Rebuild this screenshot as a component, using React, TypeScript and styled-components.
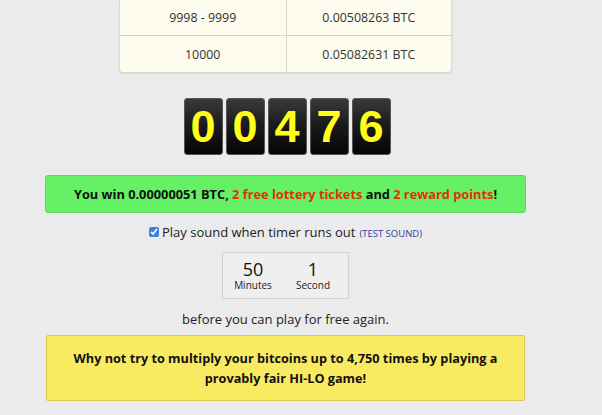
import React from "react";
import styled, { createGlobalStyle } from "styled-components";

const Global = createGlobalStyle`
  html, body { margin: 0; padding: 0; background: #ebebeb; }
  body { font-family: "Open Sans", "Liberation Sans", sans-serif; color: #222; }
`;

const Page = styled.div`
  width: 481px;
  margin-left: 45px;
  display: flex;
  flex-direction: column;
  align-items: center;
`;

const Table = styled.div`
  width: 331px;
  background: #fdfcef;
  border: 1px solid #d9d8cc;
  border-top: none;
  border-radius: 0 0 4px 4px;
  box-shadow: 0 1px 2px rgba(0,0,0,0.08);
  display: grid;
  grid-template-columns: 1fr 1fr;
`;

const Cell = styled.div<{ $h: number; $last?: boolean; $right?: boolean }>`
  height: ${(p) => p.$h}px;
  display: flex;
  align-items: center;
  justify-content: center;
  font-size: 12.4px;
  color: #333;
  border-bottom: ${(p) => (p.$last ? "none" : "1px solid #d6d5c9")};
  border-left: ${(p) => (p.$right ? "1px solid #d6d5c9" : "none")};
`;

const Counter = styled.div`
  margin-top: 25px;
  display: flex;
  gap: 3px;
  margin-left: 3px;
`;

const Digit = styled.div`
  width: 39px;
  height: 57px;
  border-radius: 3px;
  background: linear-gradient(#3a3a3a 0%, #1c1c1c 45%, #050505 100%);
  border: 1px solid #555;
  box-sizing: border-box;
  display: flex;
  align-items: center;
  justify-content: center;
  font-family: "Liberation Sans", Arial, sans-serif;
  font-weight: bold;
  font-size: 45px;
  color: #ffff1a;
`;

const WinBar = styled.div`
  margin-top: 20px;
  width: 481px;
  height: 38px;
  box-sizing: border-box;
  background: #66f066;
  border: 1px solid #5ad95a;
  border-radius: 3px;
  display: flex;
  align-items: center;
  justify-content: center;
  font-size: 12.8px;
  font-weight: bold;
  color: #111;
`;

const Red = styled.span`
  color: #e23000;
`;

const SoundRow = styled.label`
  margin-top: 10px;
  display: flex;
  align-items: center;
  font-size: 13px;
  color: #222;
`;

const Check = styled.input`
  width: 10px;
  height: 10px;
  margin: 0 3px 0 0;
  accent-color: #3b82e0;
`;

const TestLink = styled.span`
  font-size: 9.5px;
  color: #2c3e9e;
  margin-left: 4px;
  margin-top: 2px;
`;

const TimerBox = styled.div`
  margin-top: 11px;
  width: 127px;
  height: 47px;
  box-sizing: border-box;
  border: 1px solid #d2d2d2;
  background: #efefef;
  display: flex;
  justify-content: center;
  align-items: center;
  gap: 10px;
  padding-right: 5px;
`;

const Unit = styled.div`
  width: 50px;
  display: flex;
  flex-direction: column;
  align-items: center;
`;

const UnitNum = styled.div`
  font-size: 18px;
  line-height: 17px;
  color: #111;
`;

const UnitLabel = styled.div`
  font-size: 10px;
  line-height: 11px;
  margin-top: 2px;
  color: #222;
`;

const Before = styled.div`
  margin-top: 11px;
  font-size: 13px;
  color: #222;
`;

const PromoBox = styled.div`
  margin-top: 7px;
  width: 479px;
  height: 66px;
  box-sizing: border-box;
  background: #f9ea62;
  border: 1px solid #d9c94c;
  border-radius: 2px;
  display: flex;
  align-items: center;
  justify-content: center;
  text-align: center;
  font-size: 12.7px;
  font-weight: bold;
  line-height: 20px;
  color: #111;
  padding: 0 18px;
`;

export default function App() {
  const digits = ["0", "0", "4", "7", "6"];
  return (
    <>
      <Global />
      <Page>
        <Table>
          <Cell $h={35}>9998 - 9999</Cell>
          <Cell $h={35} $right>0.00508263 BTC</Cell>
          <Cell $h={36} $last>10000</Cell>
          <Cell $h={36} $last $right>0.05082631 BTC</Cell>
        </Table>
        <Counter>
          {digits.map((d, i) => (
            <Digit key={i}>{d}</Digit>
          ))}
        </Counter>
        <WinBar>
          You win 0.00000051 BTC,&nbsp;<Red>2 free lottery tickets</Red>&nbsp;and&nbsp;
          <Red>2 reward points</Red>!
        </WinBar>
        <SoundRow>
          <Check type="checkbox" defaultChecked />
          Play sound when timer runs out
          <TestLink>(TEST SOUND)</TestLink>
        </SoundRow>
        <TimerBox>
          <Unit>
            <UnitNum>50</UnitNum>
            <UnitLabel>Minutes</UnitLabel>
          </Unit>
          <Unit>
            <UnitNum>1</UnitNum>
            <UnitLabel>Second</UnitLabel>
          </Unit>
        </TimerBox>
        <Before>before you can play for free again.</Before>
        <PromoBox>
          Why not try to multiply your bitcoins up to 4,750 times by playing a provably fair HI-LO game!
        </PromoBox>
      </Page>
    </>
  );
}
